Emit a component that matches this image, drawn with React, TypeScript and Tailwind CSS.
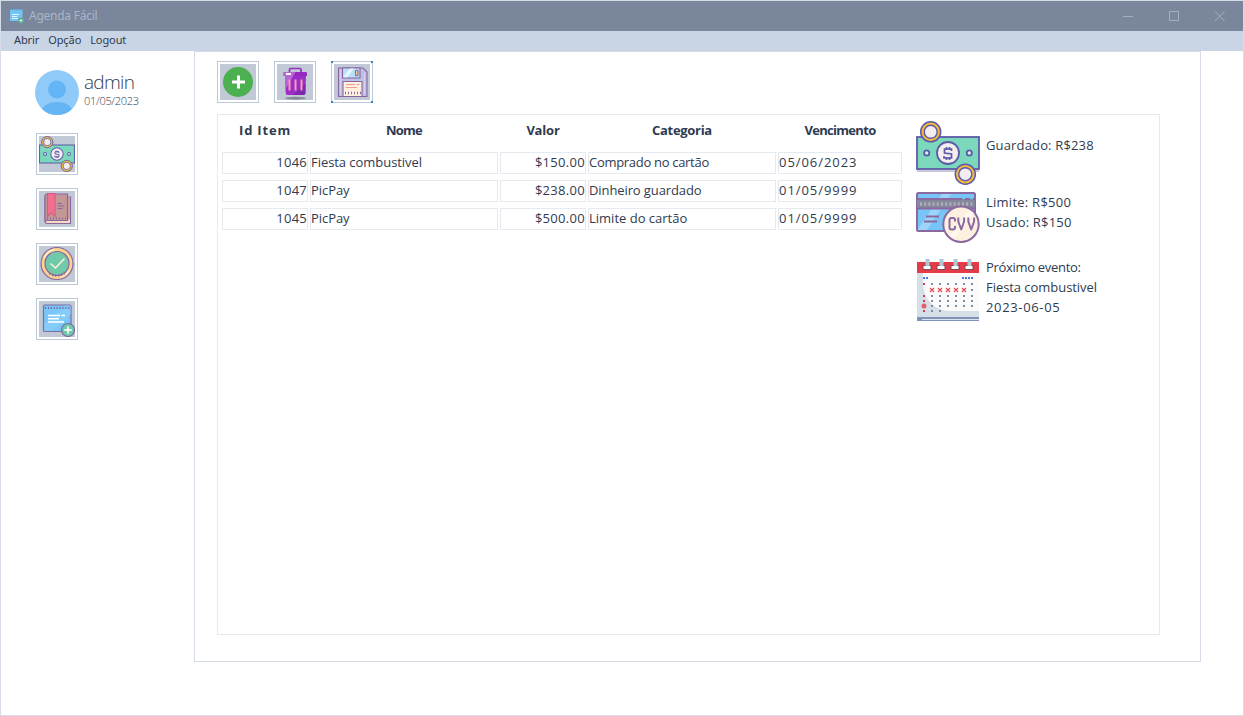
import type { ReactNode } from "react";

function MoneyIcon({ size }: { size: number }) {
  return (
    <svg width={size} height={size} viewBox="0 0 64 64" fill="none" stroke="#5c5ba8" strokeWidth="1.8">
      <path d="M1 50h62" stroke="#c9c6d8" />
      <rect x="1" y="16" width="62" height="32" fill="#7bd8bd" />
      <circle cx="32" cy="32" r="11" fill="#f4edf0" />
      <circle cx="10.7" cy="32" r="2.6" fill="#d5f1ec" />
      <circle cx="53.3" cy="32" r="2.6" fill="#d5f1ec" />
      <path d="M35.5 30v-2h-7v4l7 1v4h-7.500v-2M30.500 26v3M33.500 26v3M30.500 36v3M33.500 36v3" strokeWidth="1.700" />
      <circle cx="14.7" cy="10.8" r="10" fill="#f7b93c" strokeWidth="1.500" />
      <circle cx="14.7" cy="10.8" r="6.500" fill="#f4edf0" strokeWidth="1.400" />
      <circle cx="49.3" cy="53.2" r="10" fill="#f7b93c" strokeWidth="1.500" />
      <circle cx="49.3" cy="53.2" r="6.500" fill="#f4edf0" strokeWidth="1.400" />
    </svg>
  );
}

function CardIcon() {
  return (
    <svg width="64" height="52" viewBox="0 0 64 52" fill="none" stroke="#8c68a0" strokeWidth="2">
      <rect x="1" y="1" width="58" height="38" rx="1.5" fill="#76c5f6" />
      <path d="M26 2h9L11 38H2v-1zM45 17h8L38 38h-8z" fill="#9bd5fa" stroke="none" />
      <path d="M1 7h58v9.500H1z" fill="#85879c" stroke="none" />
      <path d="M1 7h45M49 7h5M57 7h2M1 16.500h58" />
      <path d="M4 12h53" stroke="#afb0b8" strokeWidth="3.500" strokeDasharray="2 2.200" />
      <path d="M10 24.500h13M8 29.500h13" />
      <circle cx="45" cy="32.300" r="17.700" fill="#fdf0e0" />
      <path d="M53 18 34 44l4 3 20-26z" fill="#fff8ee" stroke="none" />
      <g strokeWidth="2">
        <path d="M39 29.500v-1.500a2 2 0 0 0-2-2h-1.500a2 2 0 0 0-2 2v7.500a2 2 0 0 0 2 2h1.500a2 2 0 0 0 2-2v-1.500" />
        <path d="M42.300 25.500v4l2.900 8 2.900-8v-4M52.300 25.500v4l2.900 8 2.900-8v-4" strokeLinejoin="round" />
      </g>
    </svg>
  );
}

const dotColumns = [7, 15, 23, 31, 39, 47, 55];
const dotRows = [25, 31, 37, 42, 47, 52];

function CalendarIcon() {
  return (
    <svg width="62" height="62" viewBox="0 0 62 62" fill="none">
      <path d="M0 13h62v45H0z" fill="#d4dfe8" />
      <path d="M6 13h56v39H32C18 51 7 42 6 24z" fill="#fcfbfc" />
      <path d="M0 3h62v11H0z" fill="#e53b48" />
      {[10, 24, 38, 52].map((x) => (
        <g key={x}>
          <path d={`M${x - 4} 6.500h8v4h-8z`} fill="#fff" stroke="#7b4b5b" />
          <path d={`M${x - 1.5} 0h4v7h-4z`} fill="#afc6d4" />
        </g>
      ))}
      <path d="M6 19h2M9 19h2M45 19h2M48 19h2M51 19h2M54 19h2" stroke="#4a7bd8" strokeWidth="2" />
      {dotRows.map((y, row) =>
        dotColumns.map((x, col) => {
          if (row === 5 && col > 2) return null;
          if (row === 1) {
            if (col === 0) return null;
            if (col < 6)
              return <path key={x} d={`M${x - 2} ${y - 2}l4 4m0-4l-4 4`} stroke="#e4505a" strokeWidth="1.300" />;
          }
          return <rect key={x} x={x - 1} y={y - 1} width="2" height="2" fill={col === 0 ? "#dc3d49" : "#7f8ca9"} />;
        }),
      )}
      <circle cx="7" cy="47" r="2.500" fill="#e4616b" />
      <path d="M0 58h62v4H0z" fill="#7f93b8" />
      <path d="M5 60.500h57" stroke="#dce3ee" />
    </svg>
  );
}

function BookIcon() {
  return (
    <svg width="36" height="36" viewBox="0 0 36 36" fill="none" stroke="#8a65a0" strokeWidth="1.100">
      <path d="M6 30V6h25.500v26.500H8.500q-2.500 0-2.500-2.500z" fill="#f5dfc0" />
      <path d="M28.500 6.500h2.500v22h-2.500z" fill="#c9a29c" stroke="none" />
      <path d="M6 30V5q0-2 2-2h20.500v26.500H8.500q-1.500 0-2.500.5z" fill="#c29896" />
      <path d="M8.500 2.500h7.500v23l-3.700-4-3.800 4z" fill="#f2708f" stroke="#d65b84" />
      <path d="M8 27.500h19" strokeDasharray="1 2" strokeWidth="2" />
      <path d="M18.500 12.500h4.500M18.500 15h7M18.500 17.500h5" strokeWidth="1" />
    </svg>
  );
}

function CheckIcon() {
  return (
    <svg width="36" height="36" viewBox="0 0 36 36" fill="none" stroke="#8a65a0" strokeWidth="1.200">
      <circle cx="18" cy="17.500" r="16" fill="#fad391" />
      <path d="M5 12a14 14 0 0 1 11-8.500M30.500 24a14 14 0 0 1-9 7" stroke="#fff0c9" strokeWidth="1.500" />
      <circle cx="18" cy="17.500" r="12" fill="#70c9a8" />
      <path d="M10.500 27.500q7.500 4 15 0" strokeDasharray="1 2" strokeWidth="2.500" />
      <path d="m11.500 17.500 5 4.500 9-9.500" stroke="#fff3dd" strokeWidth="1.500" />
    </svg>
  );
}

function NoteIcon({ size }: { size: number }) {
  return (
    <svg width={size} height={size} viewBox="0 0 36 36" fill="none">
      <rect x="4.500" y="4" width="27.500" height="26.500" rx="1" fill="#79c7f8" stroke="#7d6ba5" strokeWidth="1.200" />
      <path d="M5 23 26 4.500h6V13L13 30H5z" fill="#91d1fa" opacity=".5" />
      <path d="M6 7h25" stroke="#7868a5" strokeWidth="1.800" strokeDasharray="1.200 1.700" />
      <path d="M9 14.500h12M22.500 14.500h3.500M9 17.700h11M9 21h16" stroke="#fff" strokeWidth="1.500" />
      <circle cx="29" cy="29" r="6.500" fill="#70c9a8" stroke="#7d6ba5" strokeWidth="1.200" />
      <path d="M29 25.200v7.600M25.200 29h7.600" stroke="#fff" strokeWidth="1.500" />
    </svg>
  );
}

function TitleIcon() {
  return (
    <svg width="16" height="16" viewBox="0 0 16 16" fill="none">
      <path d="M1 1.500h12.500v11.500H1z" fill="#73c4f6" />
      <path d="M1 2h12.500" stroke="#679fd2" strokeDasharray="1 1" />
      <path d="M3 6.500h7M3 8.500h5M3 10.500h6" stroke="#e7f5fe" />
      <circle cx="12" cy="12.500" r="2.900" fill="#5fae98" />
      <path d="M12 11v3M10.500 12.500h3" stroke="#d8f4e9" />
    </svg>
  );
}

function AddIcon() {
  return (
    <svg width="36" height="36" viewBox="0 0 36 36">
      <circle cx="18" cy="18" r="15" fill="#4caf50" />
      <path d="M18.500 11.500v13M12 18h13" stroke="#fff" strokeWidth="3" />
    </svg>
  );
}

function TrashIcon() {
  return (
    <svg width="36" height="36" viewBox="0 0 36 36" fill="none">
      <ellipse cx="18.500" cy="34.200" rx="10.500" ry="1.500" fill="#858c98" />
      <path d="M12.500 8V5.500q0-1 1-1h9.500q1 0 1 1V8" stroke="#9a2fc1" strokeWidth="1.700" />
      <path d="M8 12h21l-.7 17q-.2 2-2 2H10.700q-2 0-2-2z" fill="#9c2ec7" />
      <path d="M7.500 8h21.500q1 0 1 1v3H6.500V9q0-1 1-1z" fill="#9429bf" />
      <path d="M7.500 8h11L8.700 25 8 12H6.500V9q0-1 1-1z" fill="#b766d3" />
      <path d="M28.500 20v9q0 2-2 2H16z" fill="#8026ae" />
      <path d="M12.500 15.500v11M18.500 15.500v11M24.500 15.500v11" stroke="#f79ab7" strokeWidth="2" />
      <path d="M9 10h5" stroke="#fff" strokeWidth="2" />
    </svg>
  );
}

function SaveIcon() {
  return (
    <svg width="36" height="36" viewBox="0 0 36 36" fill="none" stroke="#8a65a0" strokeWidth="1.100">
      <path d="M4.500 4h24.500l4 4v24.500H4.500z" fill="#bdc1e3" />
      <path d="M8.500 4h17.500v10H8.500z" fill="#b8e0fa" />
      <path d="m9 13 7-8.500h4L13 13.500z" fill="#e5f5ff" stroke="none" />
      <rect x="21.500" y="6.300" width="2.500" height="5.400" rx="1" fill="#f8d28e" />
      <path d="M9 17.500h19v15H9z" fill="#fdf0dd" />
      <path d="M12 20.500h9M22.500 20.500h3M11.500 23.500h11.500" stroke="#ef9a9a" />
      <path d="M11 29h16" strokeDasharray="1 2" strokeWidth="2.500" />
      <path d="M6.500 6v24M30.500 9v21" stroke="#d3d2ec" strokeWidth="1" />
    </svg>
  );
}

function IconButton({ label, focused = false, children }: { label: string; focused?: boolean; children: ReactNode }) {
  return (
    <button
      aria-label={label}
      className="relative block h-[42px] w-[42px] shrink-0 border border-[#bcc8d8] bg-white p-0.5"
    >
      <span className="block h-9 w-9 bg-[#c0c9d5]">{children}</span>
      {focused && (
        <>
          <i className="absolute -top-px -left-px h-0.5 w-0.5 bg-[#3383c4]" />
          <i className="absolute -top-px -right-px h-0.5 w-0.5 bg-[#3383c4]" />
          <i className="absolute -bottom-px -left-px h-0.5 w-0.5 bg-[#3383c4]" />
          <i className="absolute -right-px -bottom-px h-0.5 w-0.5 bg-[#3383c4]" />
        </>
      )}
    </button>
  );
}

const rows = [
  { id: "1046", name: "Fiesta combustivel", value: "$150.00", category: "Comprado no cartão", spacing: "tracking-[-0.3px]", due: "05/06/2023" },
  { id: "1047", name: "PicPay", value: "$238.00", category: "Dinheiro guardado", spacing: "tracking-[-0.1px]", due: "01/05/9999" },
  { id: "1045", name: "PicPay", value: "$500.00", category: "Limite do cartão", spacing: "tracking-normal", due: "01/05/9999" },
];

const grid = "grid grid-cols-[86px_188px_86px_188px_124px] gap-x-0.5";
const cell = "h-[22px] whitespace-nowrap border border-[#e5e9f0] leading-[18px]";

export default function App() {
  return (
    <div className="flex h-[716px] w-[1244px] flex-col overflow-hidden border border-[#d5dce8] bg-white font-['Comic_Sans_MS','Open_Sans',sans-serif] text-[13px] text-[#2f3b50]">
      <header className="flex h-[30px] shrink-0 items-center bg-[#7a869b] pl-2 font-['Noto_Sans',sans-serif] text-xs text-[#a9b6c9]">
        <TitleIcon />
        <span className="ml-1 grow tracking-[-0.25px]">Agenda Fácil</span>
        <svg width="137" height="30" viewBox="0 0 137 30" fill="none" stroke="#a3b0c2">
          <path d="M17 15.500h10M63.500 10.500h9v9h-9zM109 10.500l9.500 9.500M118.500 10.500l-9.500 9.500" />
        </svg>
      </header>
      <nav className="flex h-5 shrink-0 gap-[9px] bg-[#c9d5e4] pl-[13px] font-['Noto_Sans',sans-serif] text-[11px] leading-[18px] tracking-[-0.1px]">
        <span>Abrir</span>
        <span>Opção</span>
        <span>Logout</span>
      </nav>
      <div className="flex">
        <aside className="w-[193px] shrink-0 pt-[19px] pl-[34px]">
          <div className="flex">
            <svg width="44" height="45" viewBox="0 0 44 45">
              <ellipse cx="22" cy="22.500" rx="22" ry="22.500" fill="#90caf9" />
              <circle cx="22" cy="19.500" r="9" fill="#64b5f6" />
              <path d="M7 39q4-7 15-7t15 7q-6 6-15 6T7 39z" fill="#64b5f6" />
            </svg>
            <div className="pl-[5px] font-['Open_Sans',sans-serif] font-light">
              <div className="text-[19px] leading-6 tracking-[-0.7px]">admin</div>
              <div className="text-[11px] leading-[14px] tracking-[-0.3px]">01/05/2023</div>
            </div>
          </div>
          <div className="mt-[18px] ml-px flex flex-col gap-[13px]">
            <IconButton label="Dinheiro"><MoneyIcon size={36} /></IconButton>
            <IconButton label="Diário"><BookIcon /></IconButton>
            <IconButton label="Concluir"><CheckIcon /></IconButton>
            <IconButton label="Nova nota"><NoteIcon size={36} /></IconButton>
          </div>
        </aside>
        <main className="h-[611px] w-[1007px] border border-[#d5dce8] pt-[9px] pl-[22px]">
          <div className="flex gap-[15px]">
            <IconButton label="Adicionar"><AddIcon /></IconButton>
            <IconButton label="Excluir"><TrashIcon /></IconButton>
            <IconButton label="Salvar" focused><SaveIcon /></IconButton>
          </div>
          <div className="mt-[11px] flex h-[521px] w-[943px] border border-[#e5e9f0] pl-1">
            <section className="w-[680px] shrink-0">
              <div className={`${grid} h-[37px] pt-[6px] text-center font-bold leading-[18px]`}>
                <span className="tracking-[0.8px]">Id Item</span>
                <span className="tracking-[-0.8px]">Nome</span>
                <span className="tracking-[-0.2px]">Valor</span>
                <span className="tracking-[-0.3px]">Categoria</span>
                <span className="tracking-[-0.7px]">Vencimento</span>
              </div>
              <div className="flex flex-col gap-[6px]">
                {rows.map((r) => (
                  <div key={r.id} className={grid}>
                    <div className={`${cell} text-right tracking-[0.25px]`}>{r.id}</div>
                    <div className={`${cell} tracking-[-0.05px]`}>{r.name}</div>
                    <div className={`${cell} text-right tracking-[0.3px]`}>{r.value}</div>
                    <div className={`${cell} ${r.spacing}`}>{r.category}</div>
                    <div className={`${cell} tracking-[0.95px]`}>{r.due}</div>
                  </div>
                ))}
              </div>
            </section>
            <section className="pt-[6px] pl-[14px] leading-5">
              <div className="flex h-[71px] gap-[6px]">
                <MoneyIcon size={64} />
                <p className="pt-[14px] tracking-[0.15px]">Guardado: R$238</p>
              </div>
              <div className="flex h-[67px] gap-[6px]">
                <CardIcon />
                <p>
                  <span className="block tracking-[0.25px]">Limite: R$500</span>
                  <span className="block tracking-[0.2px]">Usado: R$150</span>
                </p>
              </div>
              <div className="flex gap-[7px] pl-px">
                <CalendarIcon />
                <p className="-mt-0.5">
                  <span className="block tracking-[-0.3px]">Próximo evento:</span>
                  <span className="block tracking-[-0.05px]">Fiesta combustivel</span>
                  <span className="block tracking-[0.65px]">2023-06-05</span>
                </p>
              </div>
            </section>
          </div>
        </main>
      </div>
    </div>
  );
}
